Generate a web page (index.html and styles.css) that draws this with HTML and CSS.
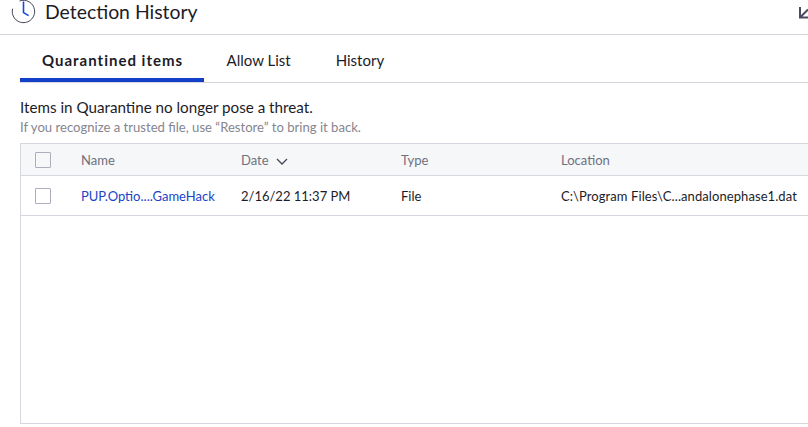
FILE: index.html
```html
<!DOCTYPE html>
<html lang="en">
<head>
  <meta charset="UTF-8">
  <title>Detection History</title>
  <link rel="stylesheet" href="styles.css">
</head>
<body>
  <header class="title-bar">
    <svg class="clock-icon" width="26" height="24" viewBox="0 0 26 24" fill="none">
      <path d="M8.5 1A11.2 11.2 0 1 1 1.6 8.7" stroke="#45465a" stroke-width="1"/>
      <path d="M12.5 1.5V12.6L17.6 15.6" stroke="#1746e0" stroke-width="1.6"/>
    </svg>
    <h1>Detection History</h1>
    <svg class="collapse-icon" width="9" height="12" viewBox="0 0 9 12" fill="none">
      <path d="M1 0V10.5H9M1.5 10L9 2.5" stroke="#4b4c63" stroke-width="2"/>
    </svg>
  </header>

  <nav class="tabs">
    <a class="tab active">Quarantined items</a>
    <a class="tab">Allow List</a>
    <a class="tab">History</a>
  </nav>

  <p class="lead">Items in Quarantine no longer pose a threat.</p>
  <p class="hint">If you recognize a trusted file, use “Restore” to bring it back.</p>

  <div class="list">
    <div class="row head">
      <span class="cell check"><span class="checkbox"></span></span>
      <span class="cell name">Name</span>
      <span class="cell date">Date
        <svg width="12" height="7" viewBox="0 0 12 7" fill="none"><path d="M1 1L6 6L11 1" stroke="#45465a" stroke-width="1.3"/></svg>
      </span>
      <span class="cell type">Type</span>
      <span class="cell location">Location</span>
    </div>
    <div class="row item">
      <span class="cell check"><span class="checkbox"></span></span>
      <a class="cell name link">PUP.Optio....GameHack</a>
      <span class="cell date">2/16/22 11:37 PM</span>
      <span class="cell type">File</span>
      <span class="cell location path">C:\Program Files\C...andalonephase1.dat</span>
    </div>
  </div>
</body>
</html>
```

FILE: styles.css
```css
html, body {
  height: 100%;
}
body {
  font-family: "Lato", Arial, sans-serif;
  margin: 0;
  background-color: #fff;
  color: #1c1c28;
  overflow: hidden;
  display: flex;
  flex-direction: column;
}
.title-bar {
  height: 34px;
  flex: none;
  display: flex;
  align-items: flex-start;
  padding: 0 0 0 11px;
  border-bottom: 1px solid #d8d7e0;
  overflow: hidden;
}
.clock-icon {
  margin-right: 8px;
}
.title-bar h1 {
  font-size: 19.4px;
  line-height: 24px;
  font-weight: 400;
  margin: 0;
  flex: 1;
}
.collapse-icon {
  margin-top: 7px;
}
.tabs {
  display: flex;
  height: 47px;
  flex: none;
  margin-left: 20px;
  border-bottom: 1px solid #d8d7e0;
}
.tab {
  font-size: 15px;
  line-height: 50px;
  padding: 0 22px 0 23px;
  white-space: nowrap;
}
.tab.active {
  font-weight: 700;
  letter-spacing: 1px;
  padding: 0 20.5px 0 22px;
  border-bottom: 4px solid #1240c8;
}
.lead {
  font-size: 15.2px;
  line-height: 18px;
  margin: 15px 0 0 20px;
}
.hint {
  font-size: 13.1px;
  line-height: 16px;
  color: #85858f;
  margin: 3px 0 0 20px;
}
.list {
  flex: 1;
  margin: 8px 0 3px 20px;
  border: 1px solid #d8d7e0;
  border-right: none;
}
.row {
  display: flex;
  align-items: center;
  border-bottom: 1px solid #d8d7e0;
  font-size: 13px;
  white-space: nowrap;
}
.head {
  height: 31px;
  background-color: #f6f7f9;
  color: #6f7080;
}
.item {
  height: 39px;
  color: #1c1c28;
}
.cell {
  flex: none;
  width: 160px;
}
.path {
  letter-spacing: 0.08px;
  width: 240px;
}
.check {
  width: 60px;
  padding-left: 14px;
  box-sizing: border-box;
  display: flex;
}
.checkbox {
  width: 14px;
  height: 14px;
  border: 1px solid #aeadbb;
  border-radius: 1px;
}
.date svg {
  margin-left: 4px;
}
.link {
  color: #1a44c8;
}
```
